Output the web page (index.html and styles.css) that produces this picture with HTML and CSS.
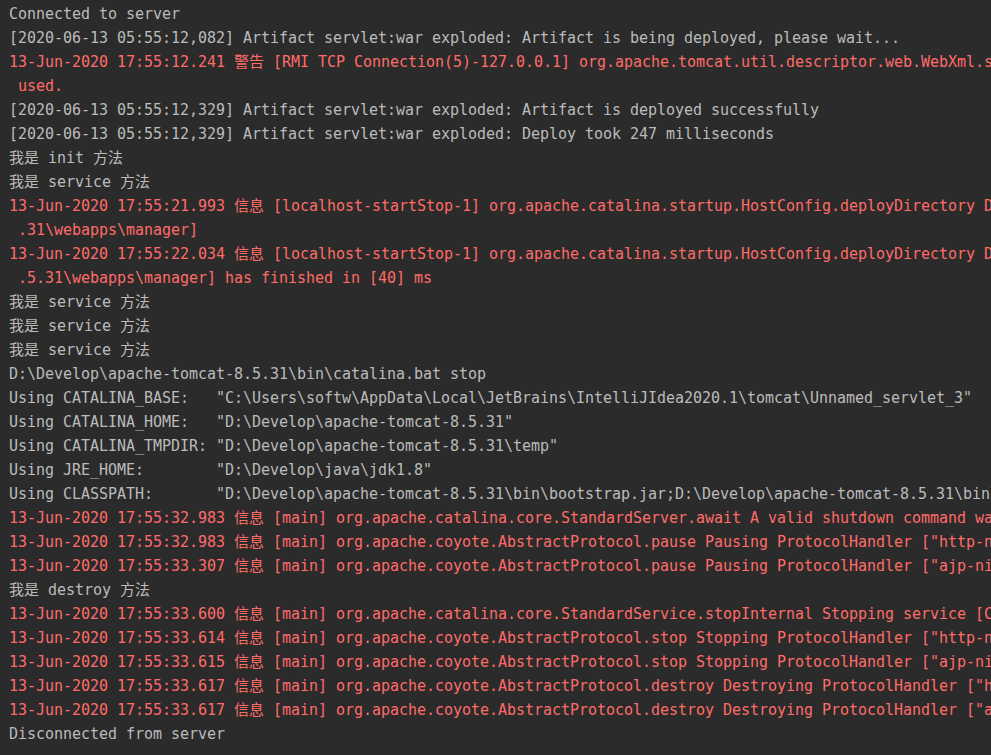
FILE: index.html
```html
<!DOCTYPE html>
<html lang="zh-CN">
<head>
  <meta charset="UTF-8" />
  <meta name="viewport" content="width=device-width, initial-scale=1.0"/>
  <title>Run - Tomcat</title>
  <link rel="stylesheet" href="styles.css">
</head>
<body>
  <div class="console">
    <div class="line">Connected to server</div>
    <div class="line">[2020-06-13 05:55:12,082] Artifact servlet:war exploded: Artifact is being deployed, please wait...</div>
    <div class="line err">13-Jun-2020 17:55:12.241 警告 [RMI TCP Connection(5)-127.0.0.1] org.apache.tomcat.util.descriptor.web.WebXml.setVersion Unknown version string [4.0]. Default version will be</div>
    <div class="line err"> used.</div>
    <div class="line">[2020-06-13 05:55:12,329] Artifact servlet:war exploded: Artifact is deployed successfully</div>
    <div class="line">[2020-06-13 05:55:12,329] Artifact servlet:war exploded: Deploy took 247 milliseconds</div>
    <div class="line">我是 init 方法</div>
    <div class="line">我是 service 方法</div>
    <div class="line err">13-Jun-2020 17:55:21.993 信息 [localhost-startStop-1] org.apache.catalina.startup.HostConfig.deployDirectory Deploying web application directory [D:\Develop\apache-tomcat-8.5</div>
    <div class="line err"> .31\webapps\manager]</div>
    <div class="line err">13-Jun-2020 17:55:22.034 信息 [localhost-startStop-1] org.apache.catalina.startup.HostConfig.deployDirectory Deployment of web application directory [D:\Develop\apache-tomcat-8</div>
    <div class="line err"> .5.31\webapps\manager] has finished in [40] ms</div>
    <div class="line">我是 service 方法</div>
    <div class="line">我是 service 方法</div>
    <div class="line">我是 service 方法</div>
    <div class="line">D:\Develop\apache-tomcat-8.5.31\bin\catalina.bat stop</div>
    <div class="line">Using CATALINA_BASE:   "C:\Users\softw\AppData\Local\JetBrains\IntelliJIdea2020.1\tomcat\Unnamed_servlet_3"</div>
    <div class="line">Using CATALINA_HOME:   "D:\Develop\apache-tomcat-8.5.31"</div>
    <div class="line">Using CATALINA_TMPDIR: "D:\Develop\apache-tomcat-8.5.31\temp"</div>
    <div class="line">Using JRE_HOME:        "D:\Develop\java\jdk1.8"</div>
    <div class="line">Using CLASSPATH:       "D:\Develop\apache-tomcat-8.5.31\bin\bootstrap.jar;D:\Develop\apache-tomcat-8.5.31\bin\tomcat-juli.jar"</div>
    <div class="line err">13-Jun-2020 17:55:32.983 信息 [main] org.apache.catalina.core.StandardServer.await A valid shutdown command was received via the shutdown port. Stopping the Server instance.</div>
    <div class="line err">13-Jun-2020 17:55:32.983 信息 [main] org.apache.coyote.AbstractProtocol.pause Pausing ProtocolHandler ["http-nio-8080"]</div>
    <div class="line err">13-Jun-2020 17:55:33.307 信息 [main] org.apache.coyote.AbstractProtocol.pause Pausing ProtocolHandler ["ajp-nio-8009"]</div>
    <div class="line">我是 destroy 方法</div>
    <div class="line err">13-Jun-2020 17:55:33.600 信息 [main] org.apache.catalina.core.StandardService.stopInternal Stopping service [Catalina]</div>
    <div class="line err">13-Jun-2020 17:55:33.614 信息 [main] org.apache.coyote.AbstractProtocol.stop Stopping ProtocolHandler ["http-nio-8080"]</div>
    <div class="line err">13-Jun-2020 17:55:33.615 信息 [main] org.apache.coyote.AbstractProtocol.stop Stopping ProtocolHandler ["ajp-nio-8009"]</div>
    <div class="line err">13-Jun-2020 17:55:33.617 信息 [main] org.apache.coyote.AbstractProtocol.destroy Destroying ProtocolHandler ["http-nio-8080"]</div>
    <div class="line err">13-Jun-2020 17:55:33.617 信息 [main] org.apache.coyote.AbstractProtocol.destroy Destroying ProtocolHandler ["ajp-nio-8009"]</div>
    <div class="line">Disconnected from server</div>
  </div>
</body>
</html>
```

FILE: styles.css
```css
html, body {
  margin: 0;
  height: 100%;
  background: #2b2b2b;
  overflow: hidden;
}
.console {
  padding: 2px 0 0 9px;
  font-family: "DejaVu Sans Mono", "Noto Sans CJK SC", monospace;
  font-size: 15px;
  letter-spacing: -0.03px;
  line-height: 24px;
  color: #bbbbbb;
}
.line {
  white-space: pre;
  height: 24px;
}
.err {
  color: #ff6b68;
}
```
